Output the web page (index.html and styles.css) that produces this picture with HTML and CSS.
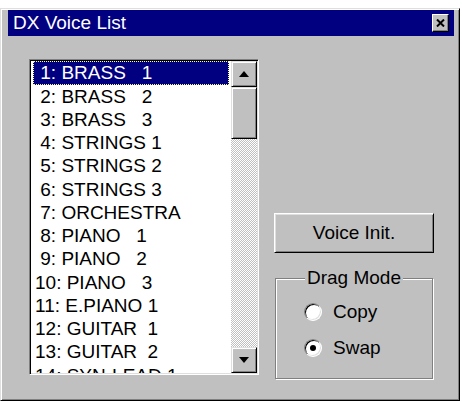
FILE: index.html
```html
<!DOCTYPE html>
<html lang="en">
<head>
    <meta charset="UTF-8">
    <title>DX Voice List</title>
    <link rel="stylesheet" href="styles.css">
</head>
<body>
    <div class="window">
        <div class="title-bar">
            <span class="title">DX Voice List</span>
            <span class="close-btn">
                <svg width="9" height="8" viewBox="0 0 9 8"><path d="M1 0.5 L8 7.5 M8 0.5 L1 7.5" stroke="#000" stroke-width="2"/></svg>
            </span>
        </div>

        <div class="client">
            <div class="listbox">
                <ul class="items">
                    <li class="selected"> 1: BRASS   1</li>
                    <li> 2: BRASS   2</li>
                    <li> 3: BRASS   3</li>
                    <li> 4: STRINGS 1</li>
                    <li> 5: STRINGS 2</li>
                    <li> 6: STRINGS 3</li>
                    <li> 7: ORCHESTRA</li>
                    <li> 8: PIANO   1</li>
                    <li> 9: PIANO   2</li>
                    <li>10: PIANO   3</li>
                    <li>11: E.PIANO 1</li>
                    <li>12: GUITAR  1</li>
                    <li>13: GUITAR  2</li>
                    <li>14: SYN-LEAD 1</li>
                </ul>
                <div class="scrollbar">
                    <div class="arrow-btn">
                        <svg width="10" height="6" viewBox="0 0 10 6"><polygon points="5,0 10,6 0,6" fill="#000"/></svg>
                    </div>
                    <div class="thumb"></div>
                    <div class="track"></div>
                    <div class="arrow-btn">
                        <svg width="10" height="6" viewBox="0 0 10 6"><polygon points="0,0 10,0 5,6" fill="#000"/></svg>
                    </div>
                </div>
            </div>

            <div class="side">
                <button class="btn">Voice Init.</button>

                <fieldset class="group">
                    <legend>Drag Mode</legend>
                    <label class="radio-row">
                        <span class="radio"></span>
                        <span>Copy</span>
                    </label>
                    <label class="radio-row">
                        <span class="radio"><span class="dot"></span></span>
                        <span>Swap</span>
                    </label>
                </fieldset>
            </div>
        </div>
    </div>
</body>
</html>
```

FILE: styles.css
```css
* {
    margin: 0;
    padding: 0;
    box-sizing: border-box;
}

body {
    background-color: #fff;
    font-family: "Liberation Sans", Arial, sans-serif;
    font-size: 19px;
    color: #000;
}

.window {
    margin-top: 8px;
    width: 460px;
    height: 393px;
    background-color: #c0c0c0;
    border: 1px solid;
    border-color: #dfdfdf #000 #000 #dfdfdf;
    box-shadow: inset 1px 1px #fff, inset -1px -1px #808080;
    padding: 1px 5px 3px 7px;
    display: flex;
    flex-direction: column;
}

.title-bar {
    height: 26px;
    background-color: #000080;
    color: #fff;
    display: flex;
    align-items: center;
    justify-content: space-between;
    padding: 0 5px;
}

.title {
    font-size: 19px;
}

.close-btn {
    width: 17px;
    height: 18px;
    background-color: #c0c0c0;
    border: 1px solid;
    border-color: #fff #000 #000 #fff;
    box-shadow: inset -1px -1px #808080;
    display: flex;
    align-items: center;
    justify-content: center;
}

.client {
    flex: 1;
    display: flex;
    align-items: flex-start;
    padding: 23px 0 0 21px;
}

.listbox {
    width: 230px;
    height: 316px;
    background-color: #fff;
    border: 1px solid;
    border-color: #808080 #fff #fff #808080;
    box-shadow: inset 1px 1px #000, inset -1px -1px #dfdfdf;
    padding: 1px;
    display: flex;
    overflow: hidden;
}

.items {
    flex: 1;
    list-style: none;
    overflow: hidden;
    padding-top: 0.4px;
}

.items li {
    height: 23.25px;
    line-height: 23.25px;
    white-space: pre;
    margin: 0 2px;
    padding-left: 2px;
}

.items li.selected {
    background-color: #000080;
    color: #fff;
    outline: 1px dotted #ffff9a;
    outline-offset: -1px;
}

.scrollbar {
    width: 26px;
    display: flex;
    flex-direction: column;
}

.arrow-btn,
.thumb {
    background-color: #c0c0c0;
    border: 1px solid;
    border-color: #dfdfdf #000 #000 #dfdfdf;
    box-shadow: inset 1px 1px #fff, inset -1px -1px #808080;
}

.arrow-btn {
    height: 26px;
    display: flex;
    align-items: center;
    justify-content: center;
}

.thumb {
    height: 52px;
}

.track {
    flex: 1;
    background: repeating-conic-gradient(#c0c0c0 0 25%, #fff 0 50%) 0 0 / 2px 2px;
}

.side {
    margin-left: 15px;
    padding-top: 154px;
    width: 160px;
    display: flex;
    flex-direction: column;
}

.btn {
    width: 160px;
    height: 40px;
    font-family: inherit;
    font-size: 19px;
    color: #000;
    background-color: #c0c0c0;
    border: 1px solid;
    border-color: #fff #000 #000 #fff;
    box-shadow: inset 1px 1px #dfdfdf, inset -1px -1px #808080;
}

.group {
    margin: 15px 0 0 1px;
    width: 158px;
    height: 111px;
    border: 1px solid #808080;
    box-shadow: inset 1px 1px #fff, 1px 1px #fff;
    padding: 6px 0 0 28px;
}

.group legend {
    margin-left: 1px;
    padding: 0 2px;
    line-height: 20px;
    background-color: #c0c0c0;
}

.radio-row {
    height: 36px;
    display: flex;
    align-items: center;
    gap: 11px;
}

.radio {
    width: 18px;
    height: 18px;
    border-radius: 50%;
    background-color: #fff;
    border: 1px solid;
    border-color: #808080 #fff #fff #808080;
    box-shadow: inset 1px 1px #000, inset -1px -1px #dfdfdf;
    display: flex;
    align-items: center;
    justify-content: center;
}

.dot {
    width: 6px;
    height: 6px;
    border-radius: 50%;
    background-color: #000;
}
```
